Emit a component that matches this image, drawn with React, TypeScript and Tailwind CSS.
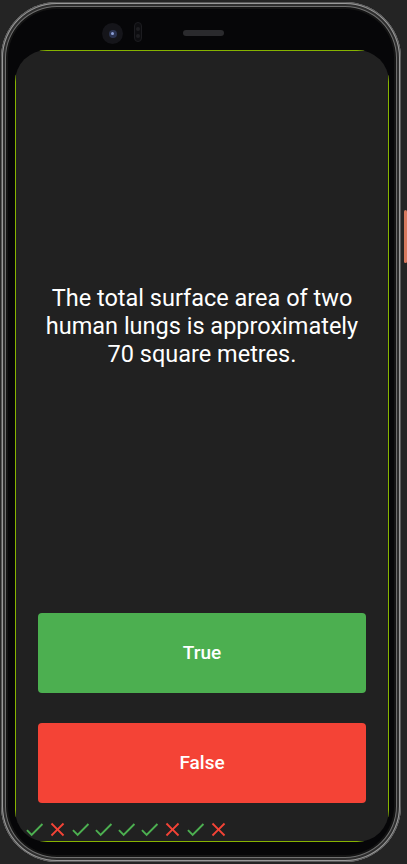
import type { FC } from "react"

// quiz answers shown in the score row
const scores: boolean[] = [true, false, true, true, true, true, false, true, false]

const CheckIcon: FC = () => (
  <svg viewBox="0 0 24 24" className="w-[23px] h-[23px]" fill="#4CAF50">
    <path d="M9 16.17L4.83 12l-1.42 1.41L9 19 21 7l-1.41-1.41z" />
  </svg>
)

const CloseIcon: FC = () => (
  <svg viewBox="0 0 24 24" className="w-[23px] h-[23px]" fill="#F44336">
    <path d="M19 6.41L17.59 5 12 10.59 6.41 5 5 6.41 10.59 12 5 17.59 6.41 19 12 13.41 17.59 19 19 17.59 13.41 12z" />
  </svg>
)

const AnswerButton: FC<{ label: string; color: string }> = ({ label, color }) => (
  <div className="h-[110px] p-[15px] flex shrink-0">
    <button
      className={`flex-1 rounded-[4px] text-white text-[19px] font-medium ${color}`}
      style={{ fontFamily: "Roboto, 'Noto Sans', sans-serif" }}
    >
      {label}
    </button>
  </div>
)

export default function App() {
  return (
    <div className="w-[407px] h-[864px] bg-[#242424] flex items-start pl-[1px] pt-[2px] overflow-hidden">
      {/* Phone body */}
      <div className="w-[400px] h-[860px] rounded-[56px] bg-[#060608] flex flex-col shadow-[inset_0_0_0_1px_#5a5a5a,inset_0_0_0_2px_#9a9a9a,inset_0_0_0_4px_#2e2e2e,inset_0_0_0_5px_#707070,inset_0_0_0_7px_#141414]">
        {/* Top bezel: camera, sensor, speaker */}
        <div className="h-[48px] flex items-start pl-[101px] pt-[21px] shrink-0">
          <div className="w-[21px] h-[21px] rounded-full bg-[#15151a] flex items-center justify-center">
            <div className="w-[8px] h-[8px] rounded-full bg-[#2b3350] flex items-center justify-center">
              <div className="w-[3px] h-[3px] rounded-full bg-[#8da0d8]" />
            </div>
          </div>
          <div className="ml-[11px] -mt-[1px] w-[8px] h-[20px] rounded-full bg-[#0d0d10] border border-[#1c1c20] flex flex-col items-center justify-around py-[2px]">
            <div className="w-[4px] h-[4px] rounded-full bg-[#1e1e22]" />
            <div className="w-[4px] h-[4px] rounded-full bg-[#1e1e22]" />
          </div>
          <div className="ml-[41px] mt-[7px] w-[41px] h-[6px] rounded-full bg-[#2a2a2d]" />
        </div>

        {/* Screen */}
        <div className="ml-[14px] w-[374px] h-[792px] rounded-[32px] overflow-hidden relative bg-[#212121] flex flex-col px-[8px]">
          <div className="absolute inset-0 border border-[#86b300] pointer-events-none" />

          <div className="h-[548px] shrink-0 flex items-center justify-center px-[10px] pt-[4px]">
            <p
              className="text-white text-center text-[23.5px] leading-[28px]"
              style={{ fontFamily: "Roboto, 'Noto Sans', sans-serif" }}
            >
              The total surface area of two human lungs is approximately 70 square metres.
            </p>
          </div>

          <AnswerButton label="True" color="bg-[#4CAF50]" />
          <AnswerButton label="False" color="bg-[#F44336]" />

          <div className="h-[24px] flex items-start shrink-0">
            {scores.map((ok, i) => (ok ? <CheckIcon key={i} /> : <CloseIcon key={i} />))}
          </div>
        </div>
      </div>

      {/* Side button */}
      <div className="ml-[3px] mt-[208px] w-[3px] h-[53px] rounded-[2px] bg-[#d9785e]" />
    </div>
  )
}
